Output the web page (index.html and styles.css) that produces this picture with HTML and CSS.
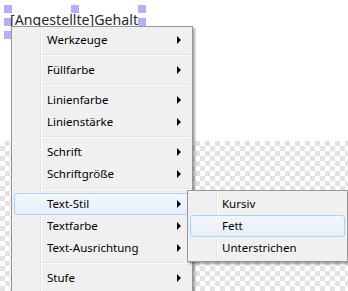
FILE: index.html
```html
<!DOCTYPE html>
<html lang="de">
<head>
  <meta charset="UTF-8">
  <title>Kontextmenü</title>
  <link rel="stylesheet" href="styles.css">
</head>
<body>
  <div class="canvas">
    <div class="label-area">
      <span class="label">[Angestellte]Gehalt</span>
      <span class="handle h-tl"></span>
      <span class="handle h-ml"></span>
      <span class="handle h-bl"></span>
      <span class="handle h-tm"></span>
      <span class="handle h-tr"></span>
      <span class="handle h-mr"></span>
    </div>
    <div class="checker"></div>
  </div>

  <div class="menu main-menu">
    <div class="menu-item">Werkzeuge<span class="arrow"></span></div>
    <div class="menu-sep"></div>
    <div class="menu-item">Füllfarbe<span class="arrow"></span></div>
    <div class="menu-sep"></div>
    <div class="menu-item">Linienfarbe<span class="arrow"></span></div>
    <div class="menu-item">Linienstärke<span class="arrow"></span></div>
    <div class="menu-sep"></div>
    <div class="menu-item">Schrift<span class="arrow"></span></div>
    <div class="menu-item">Schriftgröße<span class="arrow"></span></div>
    <div class="menu-sep"></div>
    <div class="menu-item active">Text-Stil<span class="arrow"></span></div>
    <div class="menu-item">Textfarbe<span class="arrow"></span></div>
    <div class="menu-item">Text-Ausrichtung<span class="arrow"></span></div>
    <div class="menu-sep"></div>
    <div class="menu-item">Stufe<span class="arrow"></span></div>
  </div>

  <div class="menu sub-menu">
    <div class="menu-item">Kursiv</div>
    <div class="menu-item active">Fett</div>
    <div class="menu-item">Unterstrichen</div>
  </div>
</body>
</html>
```

FILE: styles.css
```css
body {
  margin: 0;
  width: 348px;
  height: 291px;
  overflow: hidden;
  position: relative;
  font-family: 'Segoe UI', 'Noto Sans', sans-serif;
  font-size: 11.5px;
  color: #000;
}
.canvas {
  display: flex;
  flex-direction: column;
  height: 100%;
}
.label-area {
  position: relative;
  height: 141px;
  background-color: #fff;
}
.label {
  display: block;
  padding: 11px 0 0 10px;
  font-size: 14.2px;
  line-height: 18px;
  color: #2a2a2a;
  position: relative;
  z-index: 2;
}
/* Auswahl-Griffe um das Textfeld */
.handle {
  position: absolute;
  width: 8px;
  height: 8px;
  background-color: rgba(150, 150, 250, 0.75);
  z-index: 1;
}
.h-tl { left: 4px; top: 5px; }
.h-ml { left: 4px; top: 18px; }
.h-bl { left: 4px; top: 31px; }
.h-tm { left: 71px; top: 5px; }
.h-tr { left: 138px; top: 5px; }
.h-mr { left: 138px; top: 18px; }
.checker {
  flex: 1;
  background-color: #fff;
  background-image: conic-gradient(#e3e3e3 25%, #fff 0 50%, #e3e3e3 0 75%, #fff 0);
  background-size: 10px 10px;
}

.menu {
  position: absolute;
  box-sizing: border-box;
  border: 1px solid #979797;
  padding: 2px;
  background-color: #f0f0f0;
  background-image: linear-gradient(to right, transparent 28px, #e2e3e3 28px, #e2e3e3 29px, #fff 29px, #fff 30px, transparent 30px);
  box-shadow: 2px 2px 2px rgba(0, 0, 0, 0.35);
  z-index: 5;
}
.main-menu {
  left: 11px;
  top: 26px;
  width: 182px;
  height: 265px;
  border-bottom: none;
  overflow: hidden;
}
.sub-menu {
  left: 187px;
  top: 190px;
  width: 161px;
  z-index: 6;
}
.menu-item {
  box-sizing: border-box;
  height: 22px;
  flex-shrink: 0;
  display: flex;
  align-items: center;
  justify-content: space-between;
  padding: 0 8px 0 32px;
  border: 1px solid transparent;
  border-radius: 3px;
  line-height: 1;
}
.menu-item.active {
  border-color: #a8d4f7;
  background: linear-gradient(to bottom, #f3f7fc, #e6eef9);
}
.sub-menu .menu-item {
  padding-left: 31px;
}
.arrow {
  width: 0;
  height: 0;
  border-left: 4px solid #000;
  border-top: 4px solid transparent;
  border-bottom: 4px solid transparent;
}
.menu-sep {
  height: 8px;
  margin-left: 28px;
  background: linear-gradient(to bottom, transparent 3px, #e2e3e3 3px, #e2e3e3 4px, #fff 4px, #fff 5px, transparent 5px);
}
```
